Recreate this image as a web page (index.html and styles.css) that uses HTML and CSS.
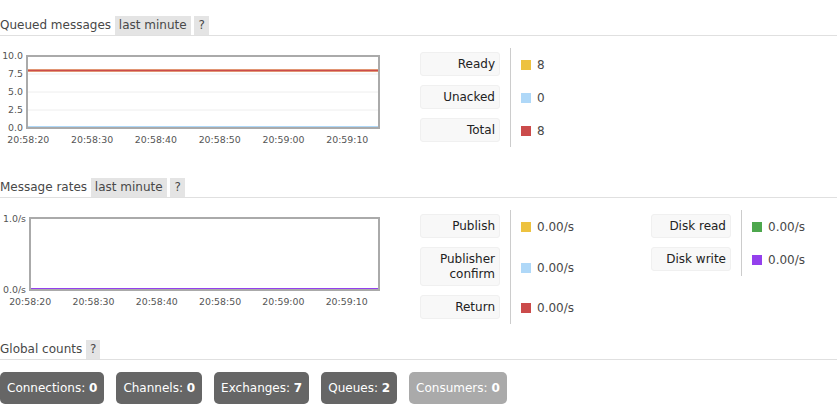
FILE: index.html
```html
<!DOCTYPE html>
<html lang="en">
<head>
  <meta charset="UTF-8">
  <title>Overview</title>
  <link rel="stylesheet" href="styles.css">
</head>
<body>

  <!-- ---------- Queued messages ---------- -->
  <div class="section">
    <h2>Queued messages <span class="tag">last minute</span> <span class="tag">?</span></h2>
    <div class="row">
      <svg class="chart" width="410" height="118" viewBox="0 0 410 118">
        <g class="grid">
          <line x1="28" y1="26" x2="378" y2="26"/>
          <line x1="28" y1="44" x2="378" y2="44"/>
          <line x1="28" y1="62" x2="378" y2="62"/>
        </g>
        <line x1="28" y1="79" x2="378" y2="79" stroke="#afd8f8" stroke-width="2"/>
        <line x1="28" y1="22.4" x2="378" y2="22.4" stroke="#edc240" stroke-width="2"/>
        <line x1="28" y1="22.4" x2="378" y2="22.4" stroke="#cb4b4b" stroke-width="2"/>
        <rect class="frame" x="27" y="8" width="352" height="72"/>
        <g class="ylabels">
          <text x="23" y="11.4">10.0</text>
          <text x="23" y="29.4">7.5</text>
          <text x="23" y="47.4">5.0</text>
          <text x="23" y="65.4">2.5</text>
          <text x="23" y="83.4">0.0</text>
        </g>
        <g class="xlabels">
          <text x="28.3" y="95">20:58:20</text>
          <text x="92.1" y="95">20:58:30</text>
          <text x="155.9" y="95">20:58:40</text>
          <text x="219.7" y="95">20:58:50</text>
          <text x="283.5" y="95">20:59:00</text>
          <text x="347.3" y="95">20:59:10</text>
        </g>
      </svg>

      <table class="facts">
        <tr>
          <th><div class="label">Ready</div></th>
          <td><span class="swatch yellow"></span>8</td>
        </tr>
        <tr>
          <th><div class="label">Unacked</div></th>
          <td><span class="swatch blue"></span>0</td>
        </tr>
        <tr>
          <th><div class="label">Total</div></th>
          <td><span class="swatch red"></span>8</td>
        </tr>
      </table>
    </div>
  </div>

  <!-- ---------- Message rates ---------- -->
  <div class="section">
    <h2>Message rates <span class="tag">last minute</span> <span class="tag">?</span></h2>
    <div class="row">
      <svg class="chart" width="410" height="118" viewBox="0 0 410 118">
        <line x1="31" y1="79" x2="378" y2="79" stroke="#edc240" stroke-width="2"/>
        <line x1="31" y1="79" x2="378" y2="79" stroke="#afd8f8" stroke-width="2"/>
        <line x1="31" y1="79" x2="378" y2="79" stroke="#cb4b4b" stroke-width="2"/>
        <line x1="31" y1="79" x2="378" y2="79" stroke="#4da74d" stroke-width="2"/>
        <line x1="31" y1="79" x2="378" y2="79" stroke="#9440ed" stroke-width="2"/>
        <rect class="frame" x="30" y="8" width="349" height="72"/>
        <g class="ylabels">
          <text x="26" y="11.6">1.0/s</text>
          <text x="26" y="82.6">0.0/s</text>
        </g>
        <g class="xlabels">
          <text x="30.2" y="94.6">20:58:20</text>
          <text x="93.5" y="94.6">20:58:30</text>
          <text x="156.8" y="94.6">20:58:40</text>
          <text x="220.1" y="94.6">20:58:50</text>
          <text x="283.4" y="94.6">20:59:00</text>
          <text x="346.7" y="94.6">20:59:10</text>
        </g>
      </svg>

      <div class="legends">
        <table class="facts wide">
          <tr>
            <th><div class="label">Publish</div></th>
            <td><span class="swatch yellow"></span>0.00/s</td>
          </tr>
          <tr>
            <th><div class="label">Publisher confirm</div></th>
            <td><span class="swatch blue"></span>0.00/s</td>
          </tr>
          <tr>
            <th><div class="label">Return</div></th>
            <td><span class="swatch red"></span>0.00/s</td>
          </tr>
        </table>
        <table class="facts">
          <tr>
            <th><div class="label">Disk read</div></th>
            <td><span class="swatch green"></span>0.00/s</td>
          </tr>
          <tr>
            <th><div class="label">Disk write</div></th>
            <td><span class="swatch purple"></span>0.00/s</td>
          </tr>
        </table>
      </div>
    </div>
  </div>

  <!-- ---------- Global counts ---------- -->
  <div class="section">
    <h2>Global counts <span class="tag">?</span></h2>
    <div class="badges">
      <span class="badge">Connections: <b>0</b></span>
      <span class="badge">Channels: <b>0</b></span>
      <span class="badge">Exchanges: <b>7</b></span>
      <span class="badge">Queues: <b>2</b></span>
      <span class="badge off">Consumers: <b>0</b></span>
    </div>
  </div>

</body>
</html>
```

FILE: styles.css
```css
body {
  margin: 0;
  padding: 0;
  font-family: "DejaVu Sans", Verdana, sans-serif;
  font-size: 12px;
  color: #484848;
  background: #fff;
}

/* ---------- Cabeçalhos de seção ---------- */
.section {
  margin-top: 12px;
}
.section:first-child {
  margin-top: 16px;
}
h2 {
  margin: 0;
  font-size: 12px;
  font-weight: normal;
  line-height: 19px;
  border-bottom: 1px solid #e0e0e0;
}
.tag {
  display: inline-block;
  padding: 0 4px;
  background: #e4e4e4;
}

/* ---------- Gráfico + legenda ---------- */
.row {
  display: flex;
  align-items: flex-start;
  margin-top: 12px;
}
.chart {
  display: block;
  flex: none;
}
.chart .grid line {
  stroke: #eeeeee;
  stroke-width: 1;
}
.chart .frame {
  fill: none;
  stroke: #aaaaaa;
  stroke-width: 2;
}
.chart text {
  font-family: "DejaVu Sans", Verdana, sans-serif;
  font-size: 9.4px;
  fill: #545454;
}
.chart .ylabels text { text-anchor: end; }
.chart .xlabels text { text-anchor: middle; }

.legends {
  display: flex;
  align-items: flex-start;
  gap: 10px;
}
.row > .facts,
.row > .legends {
  margin-left: 10px;
}

.facts {
  border-collapse: separate;
  border-spacing: 0;
}
.facts th {
  padding: 4px 10px 5px 0;
  font-weight: normal;
}
.facts td {
  padding: 5px 0 4px 10px;
  border-left: 1px solid #cccccc;
  vertical-align: middle;
  white-space: nowrap;
}
.facts.wide td {
  width: 120px;
}
.label {
  width: 80px;
  box-sizing: border-box;
  padding: 4px 4px 3px;
  line-height: 15px;
  text-align: right;
  color: #222;
  background: #f8f8f8;
  border: 1px solid #f0f0f0;
  border-radius: 3px;
}
.swatch {
  display: inline-block;
  width: 10px;
  height: 10px;
  margin-right: 6px;
  vertical-align: -1px;
}
.yellow { background: #edc240; }
.blue   { background: #afd8f8; }
.red    { background: #cb4b4b; }
.green  { background: #4da74d; }
.purple { background: #9440ed; }

/* ---------- Contadores globais ---------- */
.badges {
  display: flex;
  gap: 12px;
  margin-top: 12px;
}
.badge {
  padding: 8px 7px;
  line-height: 16px;
  color: #fff;
  background: #666;
  border-radius: 5px;
}
.badge.off {
  background: #aaa;
}
```
